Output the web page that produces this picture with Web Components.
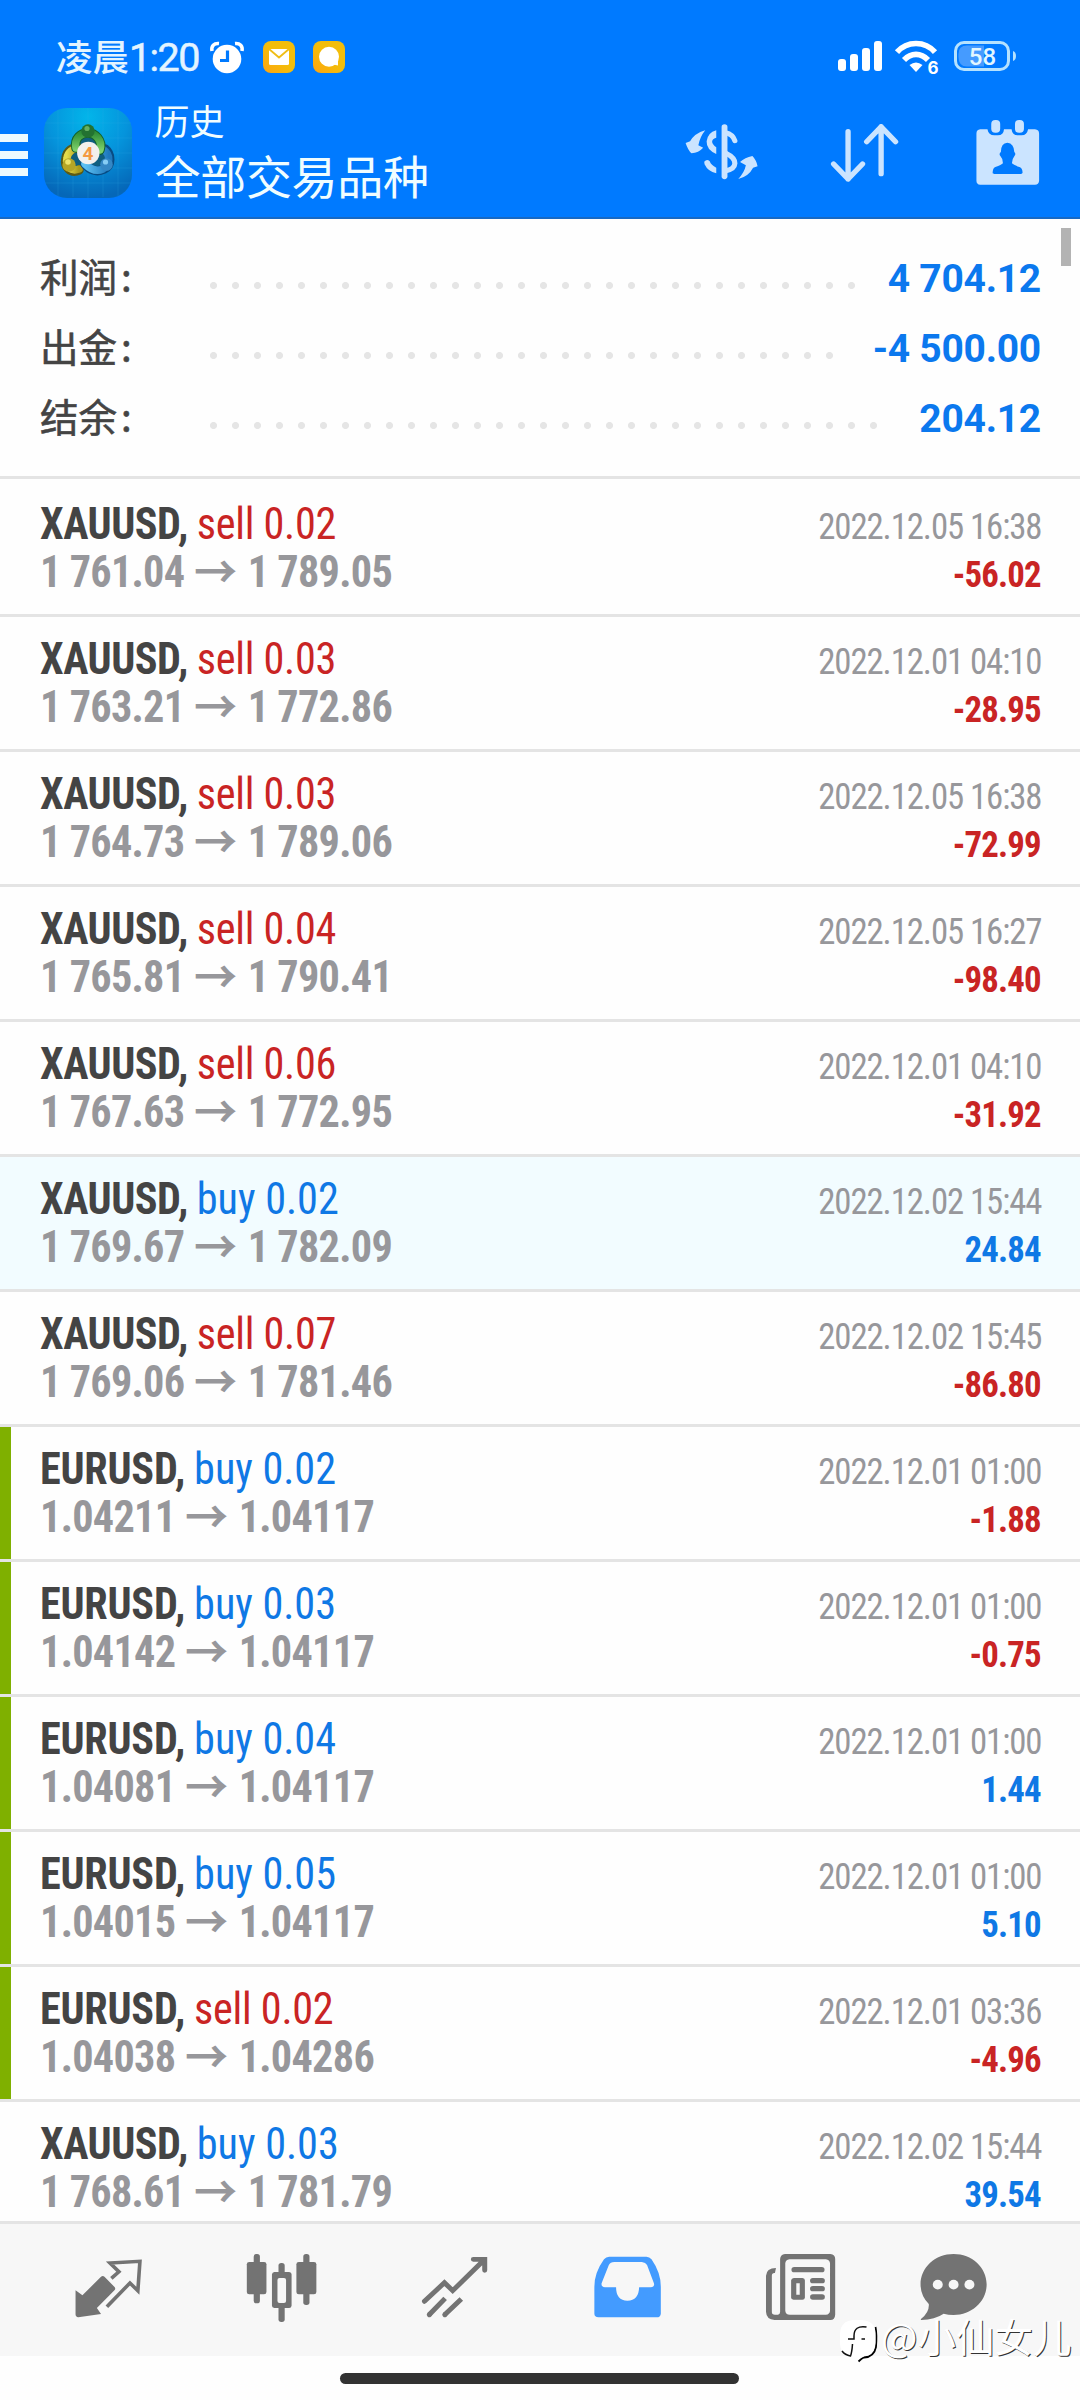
<!DOCTYPE html>
<html lang="zh-CN">
<head>
<meta charset="utf-8">
<title>历史</title>
<style>
html,body{margin:0;padding:0;background:#fefefe}
body{width:1080px;height:2400px;overflow:hidden;font-family:Roboto,"Noto Sans CJK SC",sans-serif}
</style>
</head>
<body>
<history-app></history-app>
<script>
const define = (name, html) => customElements.define(name, class extends HTMLElement {
  connectedCallback() {
    if (this.shadowRoot) return;
    const root = this.attachShadow({ mode: 'open' });
    root.innerHTML = typeof html === 'function' ? html(this) : html;
  }
});

define('status-bar', `
<style>
:host{display:flex;padding-top:18px;height:78px;align-items:center;color:#e3f4ff}
.time{display:flex;align-items:baseline;margin-left:56px;width:148px;white-space:nowrap;font:500 36.500px/48px "Noto Sans CJK SC",sans-serif}
.time b{font:400 39.500px/48px Roboto,sans-serif;letter-spacing:-1.6px;-webkit-text-stroke:.5px #e3f4ff}
svg{display:block;overflow:visible}
.sp{flex:1}
</style>
<div class="time">凌晨<b>1:20</b></div>
<svg width="134" height="36" viewBox="210 39 134 36" style="margin-left:6px">
 <defs><linearGradient id="y" x1="0" y1="1" x2="1" y2="0"><stop offset="0" stop-color="#ffa30f"/><stop offset=".5" stop-color="#f3bd0a"/></linearGradient></defs>
 <circle cx="227" cy="59" r="14.3" fill="#fff"/><path d="M227.500 50.500V60.500H220" stroke="#007aff" stroke-width="3.200" fill="none"/>
 <path d="M212 51C211 46 214 43 219 43.500M242 51C243 46 240 43 235 43.500" fill="none" stroke="#fff" stroke-width="3.500"/>
 <rect x="263" y="41" width="32" height="32" rx="8" fill="url(#y)"/><rect x="269" y="49" width="20" height="16" rx="1.500" fill="#fff"/><path d="M269 49L279 57.500L289 49" fill="none" stroke="#efbd16" stroke-width="1.800"/>
 <rect x="313" y="41" width="32" height="32" rx="8" fill="url(#y)"/><circle cx="329" cy="56.700" r="10" fill="#fff"/><path d="M331 64L338 65.500L338 58Z" fill="#fff"/>
</svg>
<div class="sp"></div>
<svg width="182" height="38" viewBox="836 39 182 38" style="margin-right:62px">
 <g fill="#fff"><rect x="838" y="60" width="8" height="12" rx="3"/><rect x="850" y="55" width="8" height="17" rx="3"/><rect x="862" y="49" width="8" height="23" rx="3"/><rect x="874" y="42" width="8" height="30" rx="3"/>
 <path d="M916 73L909.500 66Q916 61 922.500 66Z"/></g>
 <g fill="none" stroke="#fff" stroke-width="5.600"><path d="M897 53.200C907 41.600 925 41.600 935 53.200"/><path d="M904 61C911 53.500 921 53.500 928 61"/></g>
 <text x="927.500" y="75" font-family="Inter,sans-serif" font-weight="700" font-size="17" fill="#fff" stroke="#007aff" stroke-width="2" paint-order="stroke">6</text>
 <path d="M967 46.500H984V67.500H967Q958.500 67.500 958.500 58V55Q958.500 46.500 967 46.500Z" fill="#459bff"/>
 <rect x="955.500" y="43.500" width="53" height="27" rx="8.500" fill="none" stroke="#b5e2ff" stroke-width="3"/>
 <path d="M1013 52Q1016 53 1016 57Q1016 61 1013 62Z" fill="#b5e2ff"/>
 <text x="982.500" y="66" text-anchor="middle" font-family="Roboto,sans-serif" font-weight="500" font-size="24" fill="#e3f7ff">58</text>
</svg>`);

define('history-header', `
<style>
:host{display:flex;height:121px;border-bottom:2px solid #1769c4;color:#fff}
.menu{width:28px;margin-top:38px;display:flex;flex-direction:column;gap:9px}
.menu i{height:8px;background:#edfaff}
.logo{margin:12px 0 0 16px;width:88px;height:90px}
.names{margin-left:22.500px;display:flex;flex-direction:column;font-family:"Noto Sans CJK SC",sans-serif;color:#f0fdff}
.s{font-size:35px;line-height:50px;margin-top:-1px}
.b{font-size:46px;line-height:60px;margin-top:-1px;letter-spacing:-.3px}
.tools{margin-left:auto;margin-right:32.600px;margin-top:20.700px;display:flex;gap:63.700px;height:76.700px}
.tools svg{width:79.200px;height:76.700px}
</style>
<div class="menu"><i></i><i></i><i></i></div>
<svg class="logo" viewBox="0 0 88 90">
 <defs>
  <radialGradient id="bg" cx=".5" cy=".1" r=".9"><stop offset="0" stop-color="#02b5ea"/><stop offset=".5" stop-color="#0594dc"/><stop offset="1" stop-color="#0567b8"/></radialGradient>
  <linearGradient id="g" x2="0" y2="1"><stop offset="0" stop-color="#2f8f38"/><stop offset="1" stop-color="#7cd06a"/></linearGradient>
  <linearGradient id="ye"><stop offset="0" stop-color="#e6dc4c"/><stop offset="1" stop-color="#a89a1c"/></linearGradient>
  <linearGradient id="bl"><stop offset="0" stop-color="#5cc0f2"/><stop offset="1" stop-color="#1f78bd"/></linearGradient>
 </defs>
 <rect width="88" height="90" rx="23" fill="url(#bg)"/>
 <path d="M14 2V88M29 1V89M44 0V90M59 1V89M74 2V88M1 15H87M0 30H88M0 45H88M0 60H88M1 75H87" stroke="#38b9ef" stroke-opacity=".18" fill="none"/>
 <path d="M44 19L68 61H20Z" fill="#0f5f80"/>
 <g fill="none" stroke-linecap="round">
  <path d="M35 62C27 66 20 59 22 50C23 43 29 39 34 40" stroke="#5c5a14" stroke-width="9.500"/><path d="M35 61C27 64 21 58 23 50C24 44 29 40 34 41" stroke="url(#ye)" stroke-width="7.500"/>
  <path d="M61 41C67 46 68 57 60 61C52 65 45 61 41 56" stroke="#084b83" stroke-width="9.500"/><path d="M60 42C66 46 67 57 59 61C52 64 46 61 41 56" stroke="url(#bl)" stroke-width="7.500"/>
  <path d="M32 40C30 30 37 25 44 25S59 32 56 42" stroke="#12602c" stroke-width="9.500"/><path d="M32 40C30 30 37 25 44 25S59 32 56 42" stroke="url(#g)" stroke-width="7.500"/>
 </g>
 <circle cx="44" cy="23" r="6.700" fill="#237231"/><circle cx="43" cy="20.500" r="2.600" fill="#66b062"/>
 <circle cx="25" cy="57" r="6.700" fill="#b5a526"/><circle cx="24" cy="54" r="2.800" fill="#eee46b"/>
 <circle cx="62.500" cy="56.500" r="6.300" fill="#3487c4"/><circle cx="61.500" cy="54" r="2.600" fill="#86cdf4"/>
 <circle cx="44.300" cy="45" r="11.200" fill="#f2f0ed"/><text x="44" y="51.500" text-anchor="middle" font-family="Roboto,sans-serif" font-weight="700" font-size="19" fill="#f49a42">4</text>
</svg>
<div class="names"><span class="s">历史</span><span class="b">全部交易品种</span></div>
<div class="tools">
 <svg viewBox="413.5 350 230 230" preserveAspectRatio="none" fill="#cbe4ff"><path d="M424 428L437 423Q450 399 481 390Q466 409 461 435L475 442Q462 457 441 459Q431 450 424 428ZM577 536Q595 516 599 495L582 485Q596 472 618 467Q630 480 633 498L620 502Q608 527 577 536Z"/><path d="M513 390V412Q500 416 501 425Q502 432 513 441V461Q484 448 485 423Q488 397 513 390ZM478 484Q486 475 494 483Q498 495 513 502V519Q489 514 479 492Z"/><path d="M537 380V528" stroke="#cbe4ff" stroke-width="17" stroke-linecap="round"/><path d="M540 397Q561 402 567 421M541 459Q567 472 567 489Q566 506 541 511" fill="none" stroke="#cbe4ff" stroke-width="15" stroke-linecap="round"/></svg>
 <svg viewBox="829 350 230 230" preserveAspectRatio="none" fill="none" stroke="#cbe4ff" stroke-width="15.500" stroke-linecap="round" stroke-linejoin="round"><path d="M896 394V536M854 491L896 536L938 491M992 520V379M950 424L992 379L1034 424"/></svg>
 <svg viewBox="1243.5 350 230 230" preserveAspectRatio="none" fill="#cbe4ff"><path fill-rule="evenodd" d="M1279 387H1300Q1303 405 1320 405H1330Q1347 405 1348 387H1370Q1372 405 1388 405H1399Q1415 405 1418 387H1438Q1450 388 1450 400V541Q1449 553 1438 553H1279Q1268 552 1268 541V400Q1268 388 1279 387ZM1358 427Q1339 428 1339 455Q1332 461 1338 468Q1345 475 1345 489Q1341 494 1323 500Q1315 503 1315 519L1320 521H1398L1402 518Q1402 503 1393 500Q1376 494 1371 489Q1372 475 1378 468Q1384 461 1378 455Q1377 429 1358 427Z"/><rect x="1311" y="359" width="26" height="38" rx="12"/><rect x="1380" y="359" width="26" height="38" rx="12"/></svg>
</div>`);

define('summary-line', el => `
<style>
:host{display:flex;height:70px;padding-left:40px;padding-right:39px;align-items:flex-start;box-sizing:border-box}
.l{width:170px;margin-top:-3px;font:400 38.500px/56px "Noto Sans CJK SC",sans-serif;color:#444;-webkit-text-stroke:.6px #444}
.c{margin-left:4px}
.d{height:7px;width:${el.getAttribute('dots') * 22}px;margin-top:32px;background:radial-gradient(circle at 3.500px 3.500px,#e5e5e5 3.100px,transparent 3.900px) 0 0/22px 7px repeat-x}
.v{margin-left:auto;margin-top:1px;font:700 39px/56px Roboto,sans-serif;letter-spacing:-.25px;color:#0b78ee;white-space:nowrap}
</style>
<span class="l">${el.getAttribute('label')}<span class="c">:</span></span><span class="d"></span><span class="v"><slot></slot></span>`);

define('deal-row', el => {
  const a = n => el.getAttribute(n);
  return `
<style>
:host{display:flex;height:132px;border-bottom:3px solid #e4e4e4;padding:0 39px 0 40px;overflow:hidden;background:#fefefe;font-family:"Roboto Condensed",Roboto,sans-serif;font-stretch:75%;white-space:nowrap}
:host([first]){padding-top:3px}
:host([marked]){background:#f2fcff}
:host([open]){padding-left:0}
.bar{display:none}
:host([open]) .bar{display:block;width:11px;margin-right:29px;background:#7fb000}
.a{padding-top:18px;line-height:48px;font-size:44px;flex:1;transform:scaleX(.96);transform-origin:0 0;letter-spacing:-.75px}
.n{color:#444;font-weight:700;letter-spacing:-.5px}
:host([open]) .n{letter-spacing:-.25px}
.sell{color:#c92424}.buy{color:#0f78e5}
.a .sell{letter-spacing:-.3px}.a .buy{letter-spacing:-.05px}
.p{color:#97979b;font-weight:700;display:flex;height:48px}
.p i{font:700 45px/44px "Noto Sans CJK SC",sans-serif;letter-spacing:0;margin:0 11px 0 10px}
.r{padding-top:21px;line-height:48px;font-size:37px;text-align:right;transform:scaleX(.94);transform-origin:100% 0;letter-spacing:-1.15px}
.t{color:#97979b}.v{font-weight:700;letter-spacing:-.85px;margin-right:.6px}
</style>
<span class="bar"></span>
<div class="a"><div><span class="n">${a('symbol')},</span> <span class="${a('side')}">${a('side')} ${a('lot')}</span></div>
<div class="p"><span>${a('from')}</span><i>→</i><span>${a('to')}</span></div></div>
<div class="r"><div class="t">${a('time')}</div><div class="v ${a('profit')[0] === '-' ? 'sell' : 'buy'}">${a('profit')}</div></div>`;
});

define('tab-bar', `
<style>
:host{display:grid;grid-template-columns:repeat(5,173px) 133px;padding-left:22px;height:132px;border-top:3px solid #e4e4e4;background:#f7f7f7;justify-items:center;color:#737373}
svg{width:79.200px;height:76.700px;margin-top:26px}
</style>
<svg viewBox="200 150 230 230" preserveAspectRatio="none" fill="currentColor"><path d="M219 271L239 286L293 230Q298 226 303 230L333 262Q336 267 332 271L281 324L293 342L227 352Q219 351 219 343Z"/><path d="M323 235L345 215L319 189L406 184L400 272L377 249L310 320" fill="none" stroke="currentColor" stroke-width="10.500"/></svg>
<svg viewBox="701 150 230 230" preserveAspectRatio="none" fill="currentColor"><rect x="735" y="162" width="18" height="148" rx="8"/><rect x="715" y="186" width="57" height="97" rx="7"/><rect x="879" y="162" width="18" height="153" rx="8"/><rect x="859" y="186" width="58" height="97" rx="7"/><rect x="807" y="189" width="18" height="40" rx="8"/><rect x="807" y="315" width="18" height="51" rx="8"/><path fill-rule="evenodd" d="M795 216H838Q845 217 845 223V317Q844 324 838 324H795Q788 323 788 317V223Q789 217 795 216ZM810 234Q804 234 804 240V303Q804 309 810 309H823Q829 309 829 303V240Q829 234 823 234Z"/></svg>
<svg viewBox="1203.5 150 230 230" preserveAspectRatio="none" fill="none" stroke="currentColor" stroke-width="14.500"><path stroke-linecap="round" d="M1231 304L1289 248L1313 272L1404 180M1373 178H1406V211"/><path d="M1291 295L1244 345M1338 297L1289 345"/><path stroke-linecap="round" d="M1246 343L1245 344M1291 343L1290 344"/></svg>
<svg viewBox="138.5 150 230 230" preserveAspectRatio="none" fill="#439bff"><path fill-rule="evenodd" d="M200 170H308Q317 170 323 178Q350 218 350 260V341Q349 352 338 352H169Q157 351 157 341V260Q157 218 185 178Q191 170 200 170ZM215 186Q203 186 199 195L178 250Q176 261 188 262H220Q220 302 253 302T287 262H320Q333 261 330 250L310 195Q306 187 295 186Z"/></svg>
<svg viewBox="642.5 150 230 230" preserveAspectRatio="none" fill="currentColor"><path fill-rule="evenodd" d="M712 162H844Q858 163 858 177V344Q857 360 844 360H682Q658 358 657 335V227Q658 205 686 204L683 219Q674 218 674 227V336Q674 344 683 344H692Q698 343 698 336V177Q699 163 712 162ZM725 178Q714 179 713 190V332Q714 344 726 344H831Q842 343 843 332V190Q842 179 831 178Z"/><rect x="731" y="201" width="96" height="16" rx="8"/><rect x="785" y="234" width="43" height="16" rx="8"/><rect x="785" y="258" width="43" height="16" rx="8"/><rect x="785" y="283" width="43" height="16" rx="8"/><path fill-rule="evenodd" d="M738 234H763Q770 235 770 241V293Q769 299 763 299H737Q730 298 730 293V241Q731 235 738 234ZM745 250V284H755V250Z"/></svg>
<svg viewBox="1084 150 230 230" preserveAspectRatio="none" fill="currentColor"><path d="M1199 162C1252 162 1295 202 1295 253S1252 345 1199 345Q1183 345 1170 341Q1145 359 1105 360Q1102 359 1105 356Q1129 337 1127 312Q1103 287 1103 253C1103 202 1146 162 1199 162Z"/><g fill="#f7f7f7"><circle cx="1153" cy="254" r="14.500"/><circle cx="1199" cy="254" r="14.500"/><circle cx="1245" cy="254" r="14.500"/></g></svg>`);

define('photo-mark', `
<style>
:host{position:absolute;left:838px;top:2310px;display:flex;color:#fff;white-space:nowrap;font:400 38.500px/50px "Noto Sans CJK SC",sans-serif;text-shadow:1px 1px 0 #333}
svg{width:42px;height:56px;flex:none;margin-right:1px;margin-top:1px}
</style>
<svg viewBox="838 2312 42 56"><path d="M875.500 2328Q877 2336 876 2348Q874 2358 864 2358.500Q862 2359 858.500 2362.500" fill="none" stroke="#000" stroke-width="1.800"/><path d="M853 2321H862Q875 2322 875.500 2334V2344Q874 2357 864 2357L857 2361L855 2358Q841 2358 840 2345V2334Q841 2322 853 2321Z" fill="#fff"/><path d="M866.500 2328Q854 2326 854 2337V2340H848M861.500 2340H865M852.500 2345Q852 2353 850.500 2357Q845 2356 842 2352" fill="none" stroke="#111" stroke-width="1.500"/></svg>
<span>@小仙女儿</span>`);

const deals = [
  ['XAUUSD','sell','0.02','1 761.04','1 789.05','2022.12.05 16:38','-56.02','first'],
  ['XAUUSD','sell','0.03','1 763.21','1 772.86','2022.12.01 04:10','-28.95',''],
  ['XAUUSD','sell','0.03','1 764.73','1 789.06','2022.12.05 16:38','-72.99',''],
  ['XAUUSD','sell','0.04','1 765.81','1 790.41','2022.12.05 16:27','-98.40',''],
  ['XAUUSD','sell','0.06','1 767.63','1 772.95','2022.12.01 04:10','-31.92',''],
  ['XAUUSD','buy','0.02','1 769.67','1 782.09','2022.12.02 15:44','24.84','marked'],
  ['XAUUSD','sell','0.07','1 769.06','1 781.46','2022.12.02 15:45','-86.80',''],
  ['EURUSD','buy','0.02','1.04211','1.04117','2022.12.01 01:00','-1.88','open'],
  ['EURUSD','buy','0.03','1.04142','1.04117','2022.12.01 01:00','-0.75','open'],
  ['EURUSD','buy','0.04','1.04081','1.04117','2022.12.01 01:00','1.44','open'],
  ['EURUSD','buy','0.05','1.04015','1.04117','2022.12.01 01:00','5.10','open'],
  ['EURUSD','sell','0.02','1.04038','1.04286','2022.12.01 03:36','-4.96','open'],
  ['XAUUSD','buy','0.03','1 768.61','1 781.79','2022.12.02 15:44','39.54','']
];

define('history-app', `
<style>
:host{display:flex;flex-direction:column;position:relative;width:1080px;height:2400px;overflow:hidden;background:#fefefe}
.top{background:#007aff;height:219px;flex:none}
.sum{height:257px;flex:none;box-sizing:border-box;padding-top:31px}
.list{height:1745px;flex:none;overflow:hidden;border-top:3px solid #e4e4e4;box-sizing:border-box}
.thumb{position:absolute;left:1061px;top:228px;width:10px;height:38px;background:#b3b3b3}
.home{width:399px;height:11px;border-radius:6px;background:#323232;margin:17px 0 0 340px}
tab-bar{flex:none}
</style>
<div class="top"><status-bar></status-bar><history-header></history-header></div>
<div class="sum"><summary-line label="利润" dots="30">4 704.12</summary-line><summary-line label="出金" dots="29">-4 500.00</summary-line><summary-line label="结余" dots="31">204.12</summary-line></div>
<div class="list">${deals.map(d => `<deal-row symbol="${d[0]}" side="${d[1]}" lot="${d[2]}" from="${d[3]}" to="${d[4]}" time="${d[5]}" profit="${d[6]}" ${d[7]}></deal-row>`).join('')}</div>
<tab-bar></tab-bar>
<div class="home"></div>
<div class="thumb"></div>
<photo-mark></photo-mark>`);
</script>
</body>
</html>
